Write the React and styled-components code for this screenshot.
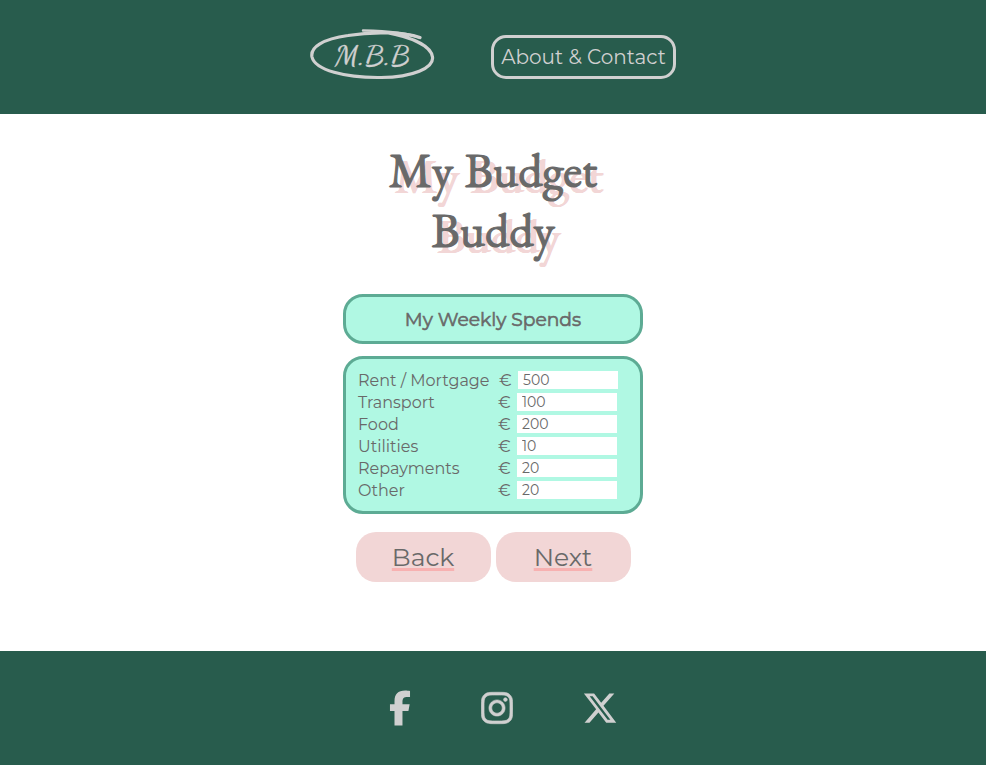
import React from 'react';
import styled, { createGlobalStyle } from 'styled-components';
import { FaFacebookF, FaInstagram, FaXTwitter } from 'react-icons/fa6';

const colors = {
  green: '#285c4d',
  light: '#d0d0d0',
  text: '#696969',
  pink: '#f2d6d6',
  rose: '#f7b1b1',
  mint: '#b0f8e3',
  teal: '#5dab94',
};

const GlobalStyle = createGlobalStyle`
  *, *::before, *::after { box-sizing: border-box; }
  body {
    margin: 0;
    background: #fff;
    color: ${colors.text};
    font-family: Montserrat, Inter, "Liberation Sans", sans-serif;
  }
`;

const Page = styled.div`
  display: flex;
  flex-direction: column;
  height: 765px;
  overflow: hidden;
`;

const Header = styled.header`
  display: flex;
  justify-content: center;
  height: 114px;
  padding-top: 27px;
  background: ${colors.green};
`;

const Logo = styled.svg`
  display: block;
  width: 130px;
  height: 56px;
  margin-right: 51px;
  color: ${colors.light};
`;

const LogoText = styled.text`
  font-family: "Dancing Script", Caveat, Lato, sans-serif;
  font-size: 29px;
  font-weight: 400;
  fill: currentColor;
  stroke: currentColor;
  stroke-width: 0.3px;
`;

const NavLink = styled.a`
  display: flex;
  align-items: center;
  justify-content: center;
  width: 185px;
  height: 44px;
  margin-top: 8px;
  border: 3px solid ${colors.light};
  border-radius: 15px;
  color: ${colors.light};
  font-size: 20px;
  white-space: nowrap;
`;

const Main = styled.main`
  display: flex;
  flex: 1;
  flex-direction: column;
  align-items: center;
`;

const Title = styled.h1`
  width: 300px;
  height: 120px;
  margin: 26px 0 0;
  font-family: "EB Garamond", "Liberation Serif", serif;
  font-size: 48px;
  font-weight: 400;
  font-kerning: none;
  word-spacing: 2px;
  line-height: 60px;
  text-align: center;
  text-shadow:
    5.4px 5.6px 0 ${colors.pink},
    6.6px 5.6px 0 ${colors.pink},
    5.4px 6.4px 0 ${colors.pink},
    6.6px 6.4px 0 ${colors.pink};
  -webkit-text-stroke: 1.2px ${colors.text};
`;

const Panel = styled.section`
  width: 300px;
  border: 3px solid ${colors.teal};
  border-radius: 20px;
  background: ${colors.mint};
`;

const HeadingPanel = styled(Panel)`
  display: flex;
  align-items: center;
  justify-content: center;
  height: 50px;
  margin-top: 34px;
`;

const Heading = styled.h2`
  margin: 0;
  font-size: 18.72px;
  font-weight: 400;
  -webkit-text-stroke: 0.6px ${colors.text};
`;

const FormPanel = styled(Panel)`
  height: 158px;
  margin-top: 12px;
  padding: 10px 12px;
`;

const Row = styled.label`
  display: grid;
  grid-template-columns: ${(p) => (p.$wide ? 141 : 140)}px 19px 100px;
  align-items: center;
  height: 22px;
  font-size: 16px;
`;

const Name = styled.span`
  white-space: nowrap;
`;

const Amount = styled.input`
  width: 100px;
  height: 18px;
  padding: 0 5px;
  border: 0;
  border-radius: 0;
  background: #fff;
  color: ${colors.text};
  font: 400 14px Montserrat, Inter, sans-serif;
`;

const Actions = styled.div`
  display: flex;
  gap: 5px;
  margin-top: 18px;
`;

const Button = styled.a`
  display: flex;
  align-items: center;
  justify-content: center;
  width: 135px;
  height: 50px;
  border-radius: 20px;
  background: ${colors.pink};
  font-size: 25px;
  text-decoration: underline;
  text-decoration-color: ${colors.rose};
  text-decoration-thickness: 3px;
  text-underline-offset: 2px;
  text-decoration-skip-ink: none;
`;

const Footer = styled.footer`
  display: flex;
  justify-content: center;
  gap: 69.5px;
  height: 114px;
  padding: 39px 0 0 21px;
  background: ${colors.green};
  color: ${colors.light};
  font-size: 36px;
`;

const SocialIcon = styled.svg`
  display: block;
  width: ${(p) => p.$width}px;
  height: 36px;
  flex: none;
  stroke: currentColor;
  stroke-width: ${(p) => p.$stroke || 0}px;
`;

const spends = [
  { name: 'Rent / Mortgage', value: 500 },
  { name: 'Transport', value: 100 },
  { name: 'Food', value: 200 },
  { name: 'Utilities', value: 10 },
  { name: 'Repayments', value: 20 },
  { name: 'Other', value: 20 },
];

export default function App() {
  return (
    <Page>
      <GlobalStyle />
      <Header>
        <Logo viewBox="0 0 130 56" role="img" aria-label="M.B.B">
          <g fill="none" stroke="currentColor" strokeLinecap="round">
            <path d="M110 10.500C94 5.500 65 4 38 8.500C13 12 0 20 2 30C5 43 35 51 71 50.5C103 50 124 41 122.500 30C121 18 100 10 76 5.500" strokeWidth="3.200" />
            <path d="M53 3.500C77 4 98 6 110 11" strokeWidth="2.400" />
          </g>
          <LogoText x="25" y="37.500" textLength="75" lengthAdjust="spacingAndGlyphs">M.B.B</LogoText>
        </Logo>
        <NavLink>About &amp; Contact</NavLink>
      </Header>
      <Main>
        <Title>My Budget Buddy</Title>
        <HeadingPanel>
          <Heading>My Weekly Spends</Heading>
        </HeadingPanel>
        <FormPanel>
          {spends.map((s, i) => (
            <Row key={s.name} $wide={i === 0}>
              <Name>{s.name}</Name>
              <span>€</span>
              <Amount type="text" defaultValue={s.value} />
            </Row>
          ))}
        </FormPanel>
        <Actions>
          <Button>Back</Button>
          <Button>Next</Button>
        </Actions>
      </Main>
      <Footer>
        <SocialIcon as={FaFacebookF} $width={22} />
        <SocialIcon as={FaInstagram} $width={32} $stroke={8} />
        <SocialIcon as={FaXTwitter} $width={36} />
      </Footer>
    </Page>
  );
}
